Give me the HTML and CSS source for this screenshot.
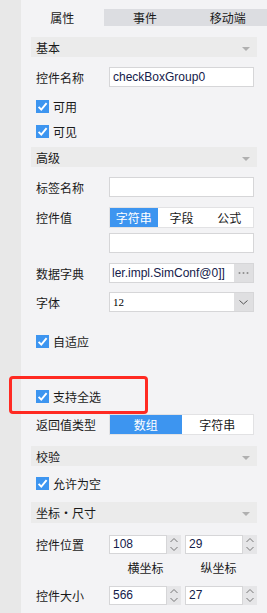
FILE: index.html
```html
<!DOCTYPE html>
<html>
<head>
<meta charset="utf-8">
<link rel="stylesheet" href="styles.css">
</head>
<body>
<div class="app">
  <div class="strip"></div>
  <div class="panel">
    <div class="tabs">
      <div class="tab active">属性</div>
      <div class="tab">事件</div>
      <div class="tab">移动端</div>
    </div>
    <div class="content">
      <div class="section s-basic">基本<span class="tri"></span></div>
      <div class="row r-name">
        <div class="label">控件名称</div>
        <div class="input text">checkBoxGroup0</div>
      </div>
      <div class="check c-enable"><span class="box"><svg viewBox="0 0 13 13"><path d="M2.6 6.8 L5.3 9.6 L10.6 3.2" fill="none" stroke="#fff" stroke-width="1.9"/></svg></span>可用</div>
      <div class="check c-visible"><span class="box"><svg viewBox="0 0 13 13"><path d="M2.6 6.8 L5.3 9.6 L10.6 3.2" fill="none" stroke="#fff" stroke-width="1.9"/></svg></span>可见</div>
      <div class="section s-adv">高级<span class="tri"></span></div>
      <div class="row r-tag">
        <div class="label">标签名称</div>
        <div class="input"></div>
      </div>
      <div class="row r-value">
        <div class="label">控件值</div>
        <div class="seg seg3">
          <div class="opt on">字符串</div>
          <div class="opt">字段</div>
          <div class="opt">公式</div>
        </div>
      </div>
      <div class="row r-value2">
        <div class="label"></div>
        <div class="input"></div>
      </div>
      <div class="row r-dict">
        <div class="label">数据字典</div>
        <div class="combo">
          <div class="ctext">ler.impl.SimConf@0]]</div>
          <div class="cbtn"><svg viewBox="0 0 19 18" width="19" height="18"><circle cx="5.5" cy="9" r="1" fill="#8c8c8c"/><circle cx="9.5" cy="9" r="1" fill="#8c8c8c"/><circle cx="13.5" cy="9" r="1" fill="#8c8c8c"/></svg></div>
        </div>
      </div>
      <div class="row r-font">
        <div class="label">字体</div>
        <div class="combo">
          <div class="ctext serif">12</div>
          <div class="cbtn"><svg viewBox="0 0 19 18" width="19" height="18"><path d="M5.5 7.5 L9.5 11 L13.5 7.5" fill="none" stroke="#555" stroke-width="1"/></svg></div>
        </div>
      </div>
      <div class="check c-auto"><span class="box"><svg viewBox="0 0 13 13"><path d="M2.6 6.8 L5.3 9.6 L10.6 3.2" fill="none" stroke="#fff" stroke-width="1.9"/></svg></span>自适应</div>
      <div class="check c-all"><span class="box"><svg viewBox="0 0 13 13"><path d="M2.6 6.8 L5.3 9.6 L10.6 3.2" fill="none" stroke="#fff" stroke-width="1.9"/></svg></span>支持全选</div>
      <div class="row r-ret">
        <div class="label">返回值类型</div>
        <div class="seg seg2">
          <div class="opt on">数组</div>
          <div class="opt">字符串</div>
        </div>
      </div>
      <div class="section s-check">校验<span class="tri"></span></div>
      <div class="check c-empty"><span class="box"><svg viewBox="0 0 13 13"><path d="M2.6 6.8 L5.3 9.6 L10.6 3.2" fill="none" stroke="#fff" stroke-width="1.9"/></svg></span>允许为空</div>
      <div class="section s-pos">坐标・尺寸<span class="tri"></span></div>
      <div class="row r-pos">
        <div class="label">控件位置</div>
        <div class="spins">
          <div class="spin"><div class="sval">108</div><div class="sarr"><svg viewBox="0 0 14 19" width="14" height="19"><path d="M3.5 7 L7 3.5 L10.5 7 M3.5 12 L7 15.5 L10.5 12" fill="none" stroke="#777" stroke-width="1"/></svg></div></div>
          <div class="spin"><div class="sval">29</div><div class="sarr"><svg viewBox="0 0 14 19" width="14" height="19"><path d="M3.5 7 L7 3.5 L10.5 7 M3.5 12 L7 15.5 L10.5 12" fill="none" stroke="#777" stroke-width="1"/></svg></div></div>
        </div>
      </div>
      <div class="row sub">
        <div class="label"></div>
        <div class="subs"><span>横坐标</span><span>纵坐标</span></div>
      </div>
      <div class="row r-size">
        <div class="label">控件大小</div>
        <div class="spins">
          <div class="spin"><div class="sval">566</div><div class="sarr"><svg viewBox="0 0 14 19" width="14" height="19"><path d="M3.5 7 L7 3.5 L10.5 7 M3.5 12 L7 15.5 L10.5 12" fill="none" stroke="#777" stroke-width="1"/></svg></div></div>
          <div class="spin"><div class="sval">27</div><div class="sarr"><svg viewBox="0 0 14 19" width="14" height="19"><path d="M3.5 7 L7 3.5 L10.5 7 M3.5 12 L7 15.5 L10.5 12" fill="none" stroke="#777" stroke-width="1"/></svg></div></div>
        </div>
      </div>
      <div class="row sub">
        <div class="label"></div>
        <div class="subs"><span>宽度</span><span>高度</span></div>
      </div>
    </div>
  </div>
  <div class="highlight"></div>
</div>
</body>
</html>
```

FILE: styles.css
```css
html, body {
  margin: 0;
  padding: 0;
  background: #f3f3f5;
  overflow: hidden;
}
body {
  font-family: "Noto Sans CJK SC", "Liberation Sans", sans-serif;
  font-size: 12px;
  color: #1a1a1a;
}
.app {
  position: relative;
  display: flex;
  width: 267px;
  height: 613px;
  overflow: hidden;
}
.strip {
  width: 21px;
  flex: none;
  background: #e8e8e8;
}
.panel {
  flex: 1;
  background: #f3f3f5;
  display: flex;
  flex-direction: column;
}
.tabs {
  margin-top: 9px;
  height: 24px;
  display: flex;
  background: #dcdde1;
}
.tab {
  flex: 1;
  display: flex;
  align-items: center;
  justify-content: center;
  font-size: 12px;
  color: #1a1a1a;
}
.tab.active {
  background: #f3f3f5;
}
.content {
  padding: 0 12px 0 10px;
  display: flex;
  flex-direction: column;
}
.section {
  height: 20px;
  background: #ebebeb;
  display: flex;
  align-items: center;
  padding: 0 7px 0 5px;
  position: relative;
  font-size: 12px;
}
.tri {
  margin-left: auto;
  width: 0;
  height: 0;
  border-left: 4px solid transparent;
  border-right: 4px solid transparent;
  border-top: 4px solid #b0b0b0;
  margin-top: 3px;
}
.s-basic { margin-top: 11px; }
.s-adv { margin-top: 6px; }
.s-check { margin-top: 11px; }
.s-pos { margin-top: 9px; height: 21px; }
.row {
  display: flex;
  align-items: center;
}
.label {
  width: 78px;
  flex: none;
  padding-left: 5px;
  box-sizing: border-box;
}
.input {
  width: 145px;
  height: 20px;
  box-sizing: border-box;
  background: #fff;
  border: 1px solid #d6d6d8;
}
.input.text {
  font-family: "Liberation Sans", sans-serif;
  color: #14204a;
  padding-left: 3px;
  line-height: 18px;
}
.r-name { margin-top: 10px; }
.r-tag { margin-top: 10px; }
.r-value { margin-top: 10px; }
.r-value2 { margin-top: 5px; }
.r-dict { margin-top: 10px; }
.r-font { margin-top: 9px; }
.r-ret { margin-top: 8px; }
.check {
  height: 20px;
  display: flex;
  align-items: center;
  padding-left: 5px;
  font-size: 12px;
}
.box {
  width: 13px;
  height: 13px;
  background: #3d95f0;
  margin-right: 4px;
  display: block;
}
.box svg { display: block; width: 13px; height: 13px; }
.c-enable { margin-top: 9px; }
.c-visible { margin-top: 5px; }
.c-auto { margin-top: 19px; }
.c-all { margin-top: 35px; }
.c-empty { margin-top: 7px; }
.seg {
  width: 145px;
  height: 21px;
  display: flex;
  background: #fff;
  border: 1px solid #e2e2e4;
  box-sizing: border-box;
}
.opt {
  flex: 1;
  display: flex;
  align-items: center;
  justify-content: center;
  font-size: 12px;
}
.opt.on {
  background: #3d95f0;
  color: #fff;
}
.combo {
  width: 145px;
  height: 20px;
  display: flex;
  box-sizing: border-box;
  border: 1px solid #d6d6d8;
  background: #fff;
}
.ctext {
  flex: 1;
  font-family: "Liberation Sans", sans-serif;
  color: #14204a;
  padding-left: 2px;
  line-height: 18px;
  overflow: hidden;
  white-space: nowrap;
}
.ctext.serif {
  font-family: "Liberation Serif", serif;
  font-size: 11px;
  padding-left: 3px;
  color: #000;
}
.cbtn {
  width: 19px;
  flex: none;
  background: #dfdfe1;
  display: flex;
  align-items: center;
  justify-content: center;
}
.cbtn svg { display: block; }
.spins {
  display: flex;
  gap: 4px;
}
.spin {
  display: flex;
  height: 19px;
}
.sval {
  width: 58px;
  box-sizing: border-box;
  border: 1px solid #d6d6d8;
  background: #fff;
  font-family: "Liberation Sans", sans-serif;
  color: #14204a;
  padding-left: 3px;
  line-height: 17px;
}
.sarr {
  width: 14px;
  background: #e6e6e8;
}
.sarr svg { display: block; }
.r-pos { margin-top: 12px; }
.r-size { margin-top: 10px; }
.sub { margin-top: 4px; height: 18px; }
.subs {
  display: flex;
  width: 146px;
}
.subs span {
  width: 76px;
  text-align: center;
  font-size: 12px;
}
.highlight {
  position: absolute;
  left: 9px;
  top: 376px;
  width: 139px;
  height: 38px;
  border: 3px solid #ff2a22;
  border-radius: 4px;
  box-sizing: border-box;
}
```
